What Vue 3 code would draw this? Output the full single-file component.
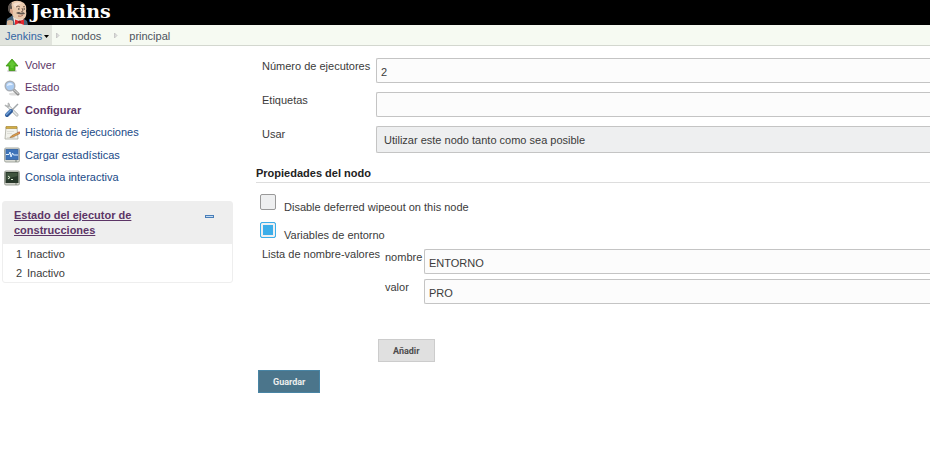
<script setup>
import { ref } from 'vue'

const tasks = [
  { label: 'Volver', icon: 'up', visited: true },
  { label: 'Estado', icon: 'search', visited: true },
  { label: 'Configurar', icon: 'tools', visited: true, current: true },
  { label: 'Historia de ejecuciones', icon: 'notepad' },
  { label: 'Cargar estadísticas', icon: 'monitor' },
  { label: 'Consola interactiva', icon: 'terminal' }
]
const executors = ['Inactivo', 'Inactivo']
const count = ref('2')
const labels = ref('')
const usage = ref('normal')
const deferred = ref(false)
const environment = ref(true)
const name = ref('ENTORNO')
const value = ref('PRO')
</script>

<template>
  <div class="page">
    <header class="header">
      <a href="#" class="logo">
        <svg class="mascot" viewBox="0 0 26 25" aria-hidden="true">
          <path d="M1 25 2 19 8 15 12 19 19 19 22 21 23 25Z" fill="#49647a" />
          <path d="M8 17 10 25H19L18 18Z" fill="#e8e6df" />
          <path d="M4 12Q2 5 7 2Q13-1 19 3Q22 6 21 11Q22 15 20 18Q17 21 12 19Q8 18 7 14Z" fill="#e9c9ad" />
          <path d="M4 12Q1 5 7 2Q6 5 7 7L7 11 6 14Z" fill="#5d5550" />
          <path d="M5 9Q7 8 8 11L8 14Q6 14 5 12Z" fill="#d5a58a" />
          <path d="M8 4Q12 1 17 3Q13 4 10 8Z" fill="#f5dfcd" />
          <path d="M11 7Q13 5 15 7M18 7Q19 6 20 7M17 8 18 11 16 12" fill="none" stroke="#71584b" stroke-width=".9" />
          <path d="M13 9H14.500M18.500 9H20" stroke="#222" />
          <path d="M11 13Q14 11 16 13Q19 11 20 14L17 14.500 13 14Z" fill="#5e544e" />
          <path d="M13 16Q16 17 18 15" fill="none" stroke="#a96b58" />
          <path d="M10 19.500 14 21 19 19.500 19 25 14 23 10 25Z" fill="#e3262e" />
          <circle cx="14.500" cy="22" r="1.500" fill="#951b20" />
          <path d="M2 21Q5 19 8 21V25H2Z" fill="#d9b89b" />
        </svg>
        <span class="brand">Jenkins</span>
      </a>
    </header>

    <nav class="breadcrumbs" aria-label="Ruta">
      <a href="#" class="home">Jenkins
        <svg class="caret" viewBox="0 0 5 3" aria-hidden="true"><path d="M0 0H5L2.5 3Z" fill="#000" /></svg>
      </a>
      <svg class="sep" viewBox="0 0 4 7" aria-hidden="true"><path d="M.5 1 3 3.5.5 6Z" fill="#ddd" stroke="#bbb" stroke-width=".7" /></svg>
      <a href="#">nodos</a>
      <svg class="sep" viewBox="0 0 4 7" aria-hidden="true"><path d="M.5 1 3 3.5.5 6Z" fill="#ddd" stroke="#bbb" stroke-width=".7" /></svg>
      <a href="#">principal</a>
    </nav>

    <div class="content">
      <aside class="side">
        <nav class="tasks" aria-label="Tareas">
          <a v-for="task in tasks" :key="task.label" href="#" :class="{ visited: task.visited, current: task.current }">
            <svg class="icon" viewBox="0 0 16 16" aria-hidden="true">
              <g v-if="task.icon === 'up'">
                <ellipse cx="8" cy="14" rx="5" ry="1" fill="#ccc" />
                <path d="M8 2 14 9H11V13.5H5V9H2Z" fill="#4db81f" stroke="#419514" stroke-width=".8" />
                <path d="M8 3.5 11.5 8H9.5V11H6.5V8H4.5Z" fill="#75cf43" opacity=".6" />
              </g>
              <g v-else-if="task.icon === 'search'">
                <ellipse cx="10" cy="14" rx="5" ry="1.5" fill="#ddd" />
                <path d="M10 10 14 14" stroke="#888" stroke-width="3" stroke-linecap="round" />
                <path d="M10 10 14 13.5" stroke="#c9c9c9" stroke-width="1.3" stroke-linecap="round" />
                <circle cx="6" cy="6" r="4.8" fill="#a9cbf2" stroke="#a9afb7" stroke-width="1.4" />
                <path d="M3 6Q3 3 6 3Q8 3 9 5Q5 5 3 6Z" fill="#e2efff" />
              </g>
              <g v-else-if="task.icon === 'tools'">
                <path d="M4 4 13 13" stroke="#a5a9aa" stroke-width="3" stroke-linecap="round" />
                <path d="M4 4 13 13" stroke="#e8eae9" stroke-width="1.7" stroke-linecap="round" />
                <path d="M1 3Q4 6 5 4Q6 3 4 1" fill="none" stroke="#b1b3b3" stroke-width="1.6" />
                <path d="M14 2 8 8" stroke="#a2a7aa" stroke-width="1.5" />
                <path d="M7 9 3 13" stroke="#315e9d" stroke-width="4" stroke-linecap="round" />
                <path d="M6.500 8.500 2.500 12.500" stroke="#6fa0d8" stroke-width="1.6" stroke-linecap="round" />
              </g>
              <g v-else-if="task.icon === 'notepad'">
                <path d="M2 2H13L14 14H1Z" fill="#f2f2ec" stroke="#aaa99f" stroke-width=".8" />
                <path d="M2 1.5H13V3.5H2Z" fill="#d4ae43" stroke="#a58433" stroke-width=".6" />
                <path d="M3 6.5H10M3 8.5H8M3 12.5H11" stroke="#deded8" />
                <path d="M15 7 8 10.5 6 12.500 9 12 16 8.500Z" fill="#e7a34a" stroke="#8c6233" stroke-width=".6" />
                <path d="M14 7 16 6.500V8.500Z" fill="#d66658" />
              </g>
              <g v-else-if="task.icon === 'monitor'">
                <rect x=".5" y="1" width="15" height="14" rx="1.5" fill="#dadbd4" stroke="#a4a8a1" />
                <rect x="2" y="2.5" width="12" height="10" fill="#3d73b9" stroke="#3f6ba5" />
                <path d="M2 7.5H5L6 5 7 10 8.5 6 9.5 8H14" fill="none" stroke="#e1f1ff" />
                <path d="M11 14H13" stroke="#7d847a" />
              </g>
              <g v-else>
                <rect x=".5" y="1" width="15" height="14" rx="1.5" fill="#d0d2c9" stroke="#9ca198" />
                <rect x="2" y="2.5" width="12" height="10" fill="#27382a" stroke="#29382b" />
                <path d="M2.5 3H13.5V6Q7 7 2.5 10Z" fill="#4b6248" opacity=".7" />
                <path d="M4 6 6 7.5 4 9M7 9.5H9" fill="none" stroke="#e2f1d8" />
                <path d="M11 14H13" stroke="#7d847a" />
              </g>
            </svg>
            <span>{{ task.label }}</span>
          </a>
        </nav>

        <section class="pane">
          <div class="pane-head">
            <a href="#">Estado del ejecutor de construcciones</a>
            <button type="button" class="collapse" aria-label="Contraer">
              <svg viewBox="0 0 9 3" aria-hidden="true"><rect x=".5" y=".5" width="8" height="2" fill="#c4dcf3" stroke="#497eb8" /></svg>
            </button>
          </div>
          <table class="executors">
            <tbody>
              <tr v-for="(state, i) in executors" :key="i">
                <td class="number">{{ i + 1 }}</td>
                <td>{{ state }}</td>
              </tr>
            </tbody>
          </table>
        </section>
      </aside>

      <main class="main">
        <form @submit.prevent>
          <div class="fields">
            <label for="count">Número de ejecutores</label>
            <input id="count" v-model="count" class="control" type="text">
            <label for="labels">Etiquetas</label>
            <input id="labels" v-model="labels" class="control" type="text">
            <label for="usage">Usar</label>
            <select id="usage" v-model="usage" class="control select">
              <option value="normal">Utilizar este nodo tanto como sea posible</option>
            </select>
          </div>

          <h2>Propiedades del nodo</h2>

          <div class="checks">
            <label><input v-model="deferred" type="checkbox"><span>Disable deferred wipeout on this node</span></label>
            <label><input v-model="environment" type="checkbox"><span>Variables de entorno</span></label>
          </div>

          <div class="variables">
            <span class="list-label">Lista de nombre-valores</span>
            <div>
              <div class="pair">
                <label for="name">nombre</label>
                <input id="name" v-model="name" class="control" type="text">
                <label for="value">valor</label>
                <input id="value" v-model="value" class="control" type="text">
              </div>
              <button type="button" class="btn">Añadir</button>
            </div>
          </div>

          <button type="submit" class="btn primary">Guardar</button>
        </form>
      </main>
    </div>
  </div>
</template>

<style>
body {
  background: #fff;
}
</style>

<style scoped>
.page {
  color: #3b3b3b;
  font: 11px/15px "Liberation Sans", Arial, sans-serif;
}

.page * {
  box-sizing: border-box;
}

a {
  color: #204a87;
  text-decoration: none;
}

.header {
  height: 25px;
  background: #000;
}

.logo {
  display: inline-flex;
  align-items: flex-start;
  padding-left: 5px;
}

.mascot {
  width: 26px;
  height: 25px;
}

.brand {
  color: #fff;
  font: bold 19px/22px "DejaVu Serif", serif;
}

.breadcrumbs {
  display: flex;
  align-items: center;
  height: 21px;
  background: #f6faf2;
  border-bottom: 1px solid #d3d7cf;
}

.breadcrumbs a {
  padding-top: 2px;
  color: #4d545d;
  line-height: 18px;
}

.breadcrumbs .home {
  display: flex;
  align-items: center;
  gap: 2px;
  padding: 2px 3px 0 5px;
  background: #e1e4dd;
  color: #3465a4;
}

.caret {
  width: 5px;
  height: 3px;
}

.sep {
  width: 4px;
  height: 7px;
  margin: 0 11px 0 4px;
}

.sep:not(:nth-child(2)) {
  margin-left: 13px;
}

.content {
  display: grid;
  grid-template-columns: 233px minmax(0, 1fr);
  column-gap: 23px;
}

.side {
  padding: 8px 0 0 2px;
}

.tasks {
  display: grid;
  grid-auto-rows: 1fr;
  min-height: 135px;
}

.tasks a {
  display: flex;
  align-items: center;
  gap: 5px;
  padding-left: 2px;
}

.tasks .visited,
.pane-head a {
  color: #5c3566;
}

.tasks .current {
  font-weight: bold;
}

.icon {
  width: 16px;
  height: 16px;
}

.pane {
  margin-top: 12px;
  border: 1px solid #eee;
  border-radius: 3px;
}

.pane-head {
  display: flex;
  align-items: flex-start;
  justify-content: space-between;
  padding: 6px 18px 6px 11px;
  background: #eee;
}

.pane-head a {
  max-width: 130px;
  font-weight: bold;
  text-decoration: underline;
}

.collapse {
  display: flex;
  padding: 7px 0;
  border: 0;
  background: none;
}

.collapse svg {
  width: 9px;
  height: 3px;
}

.executors {
  border-collapse: collapse;
}

.executors td {
  height: 19px;
  padding: 3px 0 1px;
}

.executors .number {
  width: 24px;
  padding-left: 13px;
}

.main {
  padding-top: 12px;
}

.fields {
  display: grid;
  grid-template-columns: 114px minmax(0, 1fr);
  row-gap: 9px;
  padding-left: 6px;
}

.fields label {
  padding-top: 1px;
}

.control {
  width: 100%;
  height: 25px;
  padding: 3px 4px 0;
  border: 1px solid #c4c4c4;
  border-right: 0;
  border-radius: 2px 0 0 2px;
  background: #fcfcfc;
  color: #3b3b3b;
  font: inherit;
}

.select {
  height: 27px;
  padding: 2px 7px 0;
  appearance: none;
  background: #eeeff0;
}

h2 {
  margin: 13px 0 0;
  padding-bottom: 1px;
  border-bottom: 1px solid #ddd;
  color: #222;
  font-size: 11px;
  line-height: 15px;
}

.checks label {
  display: flex;
  align-items: flex-start;
  gap: 8px;
  height: 28px;
  padding: 11px 0 0 4px;
}

.checks span {
  padding-top: 6px;
}

.checks input {
  width: 16px;
  height: 16px;
  margin: 0;
  appearance: none;
  border: 1px solid #999;
  border-radius: 2px;
  background: #eeeff0;
}

.checks input:checked {
  border-color: #3daee9;
  background: #3daee9;
  box-shadow: inset 0 0 0 2px #eff0f1;
}

.variables {
  display: grid;
  grid-template-columns: 123px minmax(0, 1fr);
  margin-top: 10px;
  padding-left: 6px;
}

.list-label {
  line-height: 11px;
}

.pair {
  display: grid;
  grid-template-columns: 39px minmax(0, 1fr);
  row-gap: 5px;
  margin-bottom: 35px;
}

.pair label {
  padding-top: 1px;
}

.btn {
  display: block;
  height: 23px;
  margin-left: -7px;
  padding: 0 14px;
  border: 1px solid #ccc;
  background: #e0e0e0;
  color: #4d4d4d;
  font: bold 9px/12px Roboto, sans-serif;
}

.primary {
  margin: 8px 0 0 2px;
  border-color: #4884a4;
  background: #4b758b;
  color: #eee;
}
</style>
